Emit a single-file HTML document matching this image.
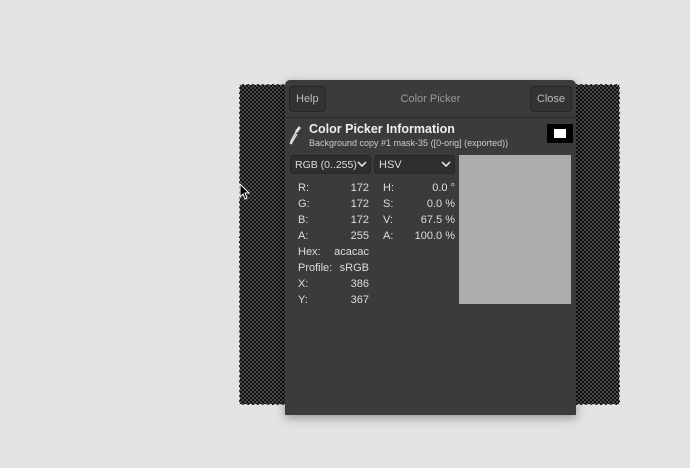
<!DOCTYPE html><html><head><style>
body{margin:0;width:690px;height:468px;background:#e2e4e3;position:relative;overflow:hidden;font-family:"Liberation Sans",sans-serif}
.pat{position:absolute;left:239px;top:84px;width:381px;height:321px;background:repeating-conic-gradient(#111 0 25%,#4a4a4a 0 50%) 0 0/4px 4px;border:1px dashed #ccc;box-sizing:border-box}
.dlg{position:absolute;left:285px;top:80px;width:291px;height:335px;background:#3b3b3b;border-radius:5px 5px 0 0;box-shadow:0 3px 10px rgba(0,0,0,.35);color:#ddd;font-size:11px}
.tb{height:37px;border-bottom:1px solid #2a2a2a;position:relative}
.btn{position:absolute;top:6px;height:24px;line-height:24px;padding:0 6px;background:#333;border:1px solid #262626;border-radius:4px;color:#bbb;font-size:11px}
.t{position:absolute;left:0;right:0;top:13px;text-align:center;color:#999;font-size:11px}
.a{position:absolute;white-space:nowrap}
.dd{position:absolute;top:155px;height:19px;line-height:18px;background:#2f2f2f;border:1px solid #262626;border-radius:3px;padding-left:4px;box-sizing:border-box;font-size:11px;color:#ddd;white-space:nowrap}
.dd svg{position:absolute;right:3px;top:5px}
.r{position:absolute;color:#ddd;font-size:11px}
</style></head><body>
<div class="pat"></div>
<div class="dlg">
<div class="tb"><div class="btn" style="left:4px">Help</div><div class="t">Color Picker</div><div class="btn" style="right:4px">Close</div></div>
<svg class="a" style="left:4px;top:44px" width="14" height="22" viewBox="0 0 14 22"><path d="M10 2 L12 4 L8 9 L6 7 Z" fill="#ddd"/><path d="M7 8 L2 17 L3 18 L8 10" stroke="#ddd" stroke-width="1.5" fill="none"/><circle cx="2" cy="19" r="1.3" fill="#ddd"/></svg>
<div class="a" style="left:24px;top:42px;font-weight:bold;font-size:12.5px;color:#eee">Color Picker Information</div>
<div class="a" style="left:24px;top:58px;font-size:9px;color:#ccc">Background copy #1 mask-35 ([0-orig] (exported))</div>
<div class="a" style="left:262px;top:44px;width:26px;height:19px;background:#000"><div style="margin:5px 7px;width:12px;height:9px;background:#fff"></div></div>
</div>
<div class="dd" style="left:290px;width:81px;font-size:10.5px">RGB (0..255)<svg width="10" height="7"><path d="M1 1 L5 5 L9 1" stroke="#ddd" stroke-width="1.6" fill="none"/></svg></div>
<div class="dd" style="left:374px;width:81px">HSV<svg width="10" height="7"><path d="M1 1 L5 5 L9 1" stroke="#ddd" stroke-width="1.6" fill="none"/></svg></div>
<div style="position:absolute;left:459px;top:155px;width:112px;height:149px;background:#acacac"></div>
<div class="r" style="left:298px;top:180px;line-height:16px">R:<br>G:<br>B:<br>A:<br>Hex:<br>Profile:<br>X:<br>Y:</div>
<div class="r" style="left:330px;width:39px;top:180px;line-height:16px;text-align:right">172<br>172<br>172<br>255<br>acacac<br>sRGB<br>386<br>367</div>
<div class="r" style="left:383px;top:180px;line-height:16px">H:<br>S:<br>V:<br>A:</div>
<div class="r" style="left:400px;width:55px;top:180px;line-height:16px;text-align:right">0.0 °<br>0.0 %<br>67.5 %<br>100.0 %</div>
<svg style="position:absolute;left:239px;top:183px" width="12" height="18"><path d="M1 1 L1 14 L4 11 L6 16 L8 15 L6 10 L10 10 Z" fill="#000" stroke="#fff" stroke-width="1"/></svg>
</body></html>
